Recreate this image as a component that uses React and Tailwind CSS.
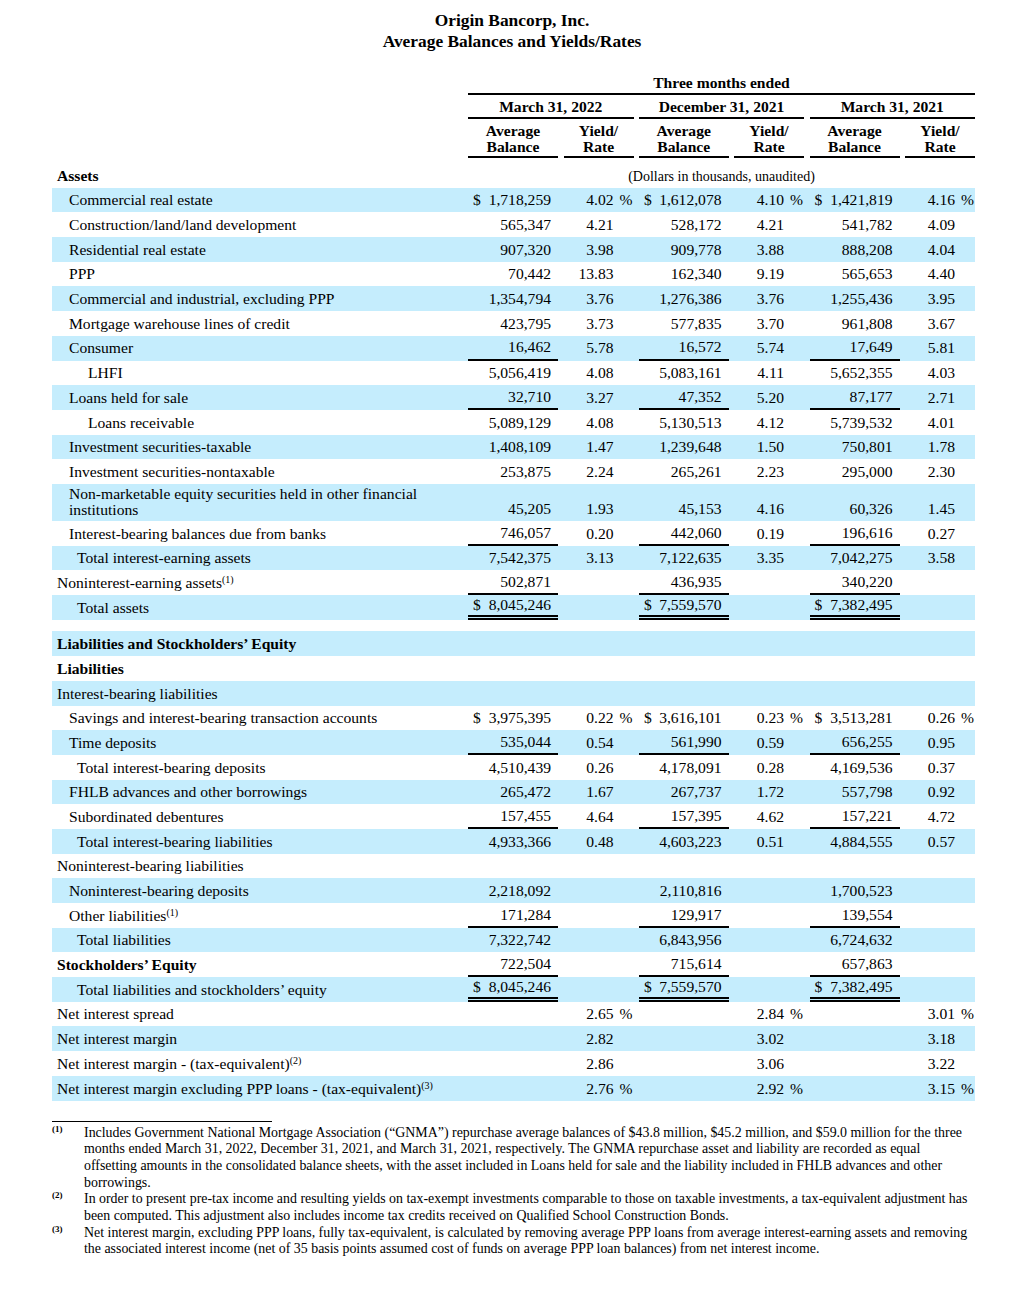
import React, { Fragment } from 'react';

// Origin Bancorp — average balances and yields/rates table

const GRID = 'grid grid-cols-[410.5px_90px_70px_89.5px_70px_90px_70px] gap-x-[5.5px]';

const INDENT = {
  0: 'pl-[5px]',
  1: 'pl-[17px]',
  2: 'pl-[25px]',
  3: 'pl-[36px]',
};

const UL = {
  single: 'border-b-2 border-black',
  double: 'border-b-[5px] border-double border-black',
};

const assets = [
  { label: 'Commercial real estate', lv: 1, v: ['1,718,259', '4.02', '1,612,078', '4.10', '1,421,819', '4.16'], dollar: true, pct: true },
  { label: 'Construction/land/land development', lv: 1, v: ['565,347', '4.21', '528,172', '4.21', '541,782', '4.09'] },
  { label: 'Residential real estate', lv: 1, v: ['907,320', '3.98', '909,778', '3.88', '888,208', '4.04'] },
  { label: 'PPP', lv: 1, v: ['70,442', '13.83', '162,340', '9.19', '565,653', '4.40'] },
  { label: 'Commercial and industrial, excluding PPP', lv: 1, v: ['1,354,794', '3.76', '1,276,386', '3.76', '1,255,436', '3.95'] },
  { label: 'Mortgage warehouse lines of credit', lv: 1, v: ['423,795', '3.73', '577,835', '3.70', '961,808', '3.67'] },
  { label: 'Consumer', lv: 1, v: ['16,462', '5.78', '16,572', '5.74', '17,649', '5.81'], ul: 'single' },
  { label: 'LHFI', lv: 3, v: ['5,056,419', '4.08', '5,083,161', '4.11', '5,652,355', '4.03'] },
  { label: 'Loans held for sale', lv: 1, v: ['32,710', '3.27', '47,352', '5.20', '87,177', '2.71'], ul: 'single' },
  { label: 'Loans receivable', lv: 3, v: ['5,089,129', '4.08', '5,130,513', '4.12', '5,739,532', '4.01'] },
  { label: 'Investment securities-taxable', lv: 1, v: ['1,408,109', '1.47', '1,239,648', '1.50', '750,801', '1.78'] },
  { label: 'Investment securities-nontaxable', lv: 1, v: ['253,875', '2.24', '265,261', '2.23', '295,000', '2.30'] },
  { label: ['Non-marketable equity securities held in other financial', 'institutions'], lv: 1, tall: true, v: ['45,205', '1.93', '45,153', '4.16', '60,326', '1.45'] },
  { label: 'Interest-bearing balances due from banks', lv: 1, v: ['746,057', '0.20', '442,060', '0.19', '196,616', '0.27'], ul: 'single' },
  { label: 'Total interest-earning assets', lv: 2, v: ['7,542,375', '3.13', '7,122,635', '3.35', '7,042,275', '3.58'] },
  { label: 'Noninterest-earning assets', sup: '(1)', lv: 0, v: ['502,871', '', '436,935', '', '340,220', ''], ul: 'single' },
  { label: 'Total assets', lv: 2, v: ['8,045,246', '', '7,559,570', '', '7,382,495', ''], dollar: true, ul: 'double' },
];

const liabilities = [
  { label: 'Liabilities and Stockholders\u2019 Equity', lv: 0, bold: true },
  { label: 'Liabilities', lv: 0, bold: true },
  { label: 'Interest-bearing liabilities', lv: 0 },
  { label: 'Savings and interest-bearing transaction accounts', lv: 1, v: ['3,975,395', '0.22', '3,616,101', '0.23', '3,513,281', '0.26'], dollar: true, pct: true },
  { label: 'Time deposits', lv: 1, v: ['535,044', '0.54', '561,990', '0.59', '656,255', '0.95'], ul: 'single' },
  { label: 'Total interest-bearing deposits', lv: 2, v: ['4,510,439', '0.26', '4,178,091', '0.28', '4,169,536', '0.37'] },
  { label: 'FHLB advances and other borrowings', lv: 1, v: ['265,472', '1.67', '267,737', '1.72', '557,798', '0.92'] },
  { label: 'Subordinated debentures', lv: 1, v: ['157,455', '4.64', '157,395', '4.62', '157,221', '4.72'], ul: 'single' },
  { label: 'Total interest-bearing liabilities', lv: 2, v: ['4,933,366', '0.48', '4,603,223', '0.51', '4,884,555', '0.57'] },
  { label: 'Noninterest-bearing liabilities', lv: 0 },
  { label: 'Noninterest-bearing deposits', lv: 1, v: ['2,218,092', '', '2,110,816', '', '1,700,523', ''] },
  { label: 'Other liabilities', sup: '(1)', lv: 1, v: ['171,284', '', '129,917', '', '139,554', ''], ul: 'single' },
  { label: 'Total liabilities', lv: 2, v: ['7,322,742', '', '6,843,956', '', '6,724,632', ''] },
  { label: 'Stockholders\u2019 Equity', lv: 0, bold: true, v: ['722,504', '', '715,614', '', '657,863', ''], ul: 'single' },
  { label: 'Total liabilities and stockholders\u2019 equity', lv: 2, v: ['8,045,246', '', '7,559,570', '', '7,382,495', ''], dollar: true, ul: 'double' },
  { label: 'Net interest spread', lv: 0, v: ['', '2.65', '', '2.84', '', '3.01'], pct: true },
  { label: 'Net interest margin', lv: 0, v: ['', '2.82', '', '3.02', '', '3.18'] },
  { label: 'Net interest margin - (tax-equivalent)', sup: '(2)', lv: 0, v: ['', '2.86', '', '3.06', '', '3.22'] },
  { label: 'Net interest margin excluding PPP loans - (tax-equivalent)', sup: '(3)', lv: 0, v: ['', '2.76', '', '2.92', '', '3.15'], pct: true },
];

function Row({ r, striped }) {
  const v = r.v || ['', '', '', '', '', ''];
  const label = Array.isArray(r.label) ? (
    <div className="flex flex-col leading-[16px]">
      {r.label.map(l => <span key={l}>{l}</span>)}
    </div>
  ) : (
    <span>
      {r.label}
      {r.sup && <sup className="text-[10px]">{r.sup}</sup>}
    </span>
  );

  return (
    <div className={`${GRID} ${r.tall ? 'h-[37px]' : 'h-[24.7px]'} ${striped ? 'bg-[#c5edfd]' : ''}`}>
      <div className={`flex items-center whitespace-nowrap ${INDENT[r.lv]} ${r.bold ? 'font-bold' : ''}`}>{label}</div>
      {[0, 1, 2].map(g => (
        <Fragment key={g}>
          <div className={`flex h-[24.7px] items-center justify-between self-end pl-[5px] pr-[7px] ${r.ul ? UL[r.ul] : ''}`}>
            <span>{r.dollar && v[g * 2] ? '$' : ''}</span>
            <span>{v[g * 2]}</span>
          </div>
          <div className="flex h-[24.7px] items-center justify-end self-end">
            <span>{v[g * 2 + 1]}</span>
            <span className="w-[20px] pr-[1px] text-right">{r.pct && v[g * 2 + 1] ? '%' : ''}</span>
          </div>
        </Fragment>
      ))}
    </div>
  );
}

const footnotes = [
  {
    mark: '(1)',
    lines: [
      'Includes Government National Mortgage Association (\u201cGNMA\u201d) repurchase average balances of $43.8 million, $45.2 million, and $59.0 million for the three',
      'months ended March 31, 2022, December 31, 2021, and March 31, 2021, respectively. The GNMA repurchase asset and liability are recorded as equal',
      'offsetting amounts in the consolidated balance sheets, with the asset included in Loans held for sale and the liability included in FHLB advances and other',
      'borrowings.',
    ],
  },
  {
    mark: '(2)',
    lines: [
      'In order to present pre-tax income and resulting yields on tax-exempt investments comparable to those on taxable investments, a tax-equivalent adjustment has',
      'been computed. This adjustment also includes income tax credits received on Qualified School Construction Bonds.',
    ],
  },
  {
    mark: '(3)',
    lines: [
      'Net interest margin, excluding PPP loans, fully tax-equivalent, is calculated by removing average PPP loans from average interest-earning assets and removing',
      'the associated interest income (net of 35 basis points assumed cost of funds on average PPP loan balances) from net interest income.',
    ],
  },
];

export default function App() {
  return (
    <div className="min-h-[1298px] bg-white pt-[10px] font-['Liberation_Serif',serif] text-[15.6px] text-black">
      {/* Title */}
      <div className="text-center text-[17.4px] font-bold leading-[21px]">
        <div>Origin Bancorp, Inc.</div>
        <div>Average Balances and Yields/Rates</div>
      </div>

      <div className="ml-[52px] w-[923px]">
        {/* Column headers */}
        <div className={`${GRID} mt-[21px]`}>
          <div />
          <div className="col-span-6 border-b-2 border-black text-center font-bold leading-[20px]">Three months ended</div>
        </div>
        <div className={`${GRID} mt-[2px]`}>
          <div />
          {['March 31, 2022', 'December 31, 2021', 'March 31, 2021'].map(t => (
            <div key={t} className="col-span-2 border-b-2 border-black text-center font-bold leading-[20px]">{t}</div>
          ))}
        </div>
        <div className={`${GRID} mt-[3px]`}>
          <div />
          {[0, 1, 2].map(g => (
            <Fragment key={g}>
              <div className="border-b-2 border-black pb-[1px] pt-px text-center font-bold leading-[16px]">Average<br />Balance</div>
              <div className="border-b-2 border-black pb-[1px] pt-px text-center font-bold leading-[16px]">Yield/<br />Rate</div>
            </Fragment>
          ))}
        </div>

        {/* Assets */}
        <div className={`${GRID} mt-[5px] h-[24.7px]`}>
          <div className="flex items-center pl-[5px] font-bold">Assets</div>
          <div className="col-span-6 flex items-center justify-center pt-[2px] text-[14px]">(Dollars in thousands, unaudited)</div>
        </div>
        {assets.map((r, i) => <Row key={i} r={r} striped={i % 2 === 0} />)}

        <div className="h-[11.8px]" />

        {/* Liabilities and equity */}
        {liabilities.map((r, i) => <Row key={i} r={r} striped={i % 2 === 0} />)}
      </div>

      {/* Footnotes */}
      <div className="ml-[52px] mt-[20px] h-px w-[220px] bg-black" />
      <div className="ml-[52px] mt-[3px] flex flex-col text-[13.9px] leading-[16.7px]">
        {footnotes.map(f => (
          <div key={f.mark} className="flex">
            <div className="w-[32px] shrink-0 text-[9px] font-bold leading-[9px]">{f.mark}</div>
            <div className="whitespace-nowrap">
              {f.lines.map((l, i) => <div key={i}>{l}</div>)}
            </div>
          </div>
        ))}
      </div>
    </div>
  );
}
